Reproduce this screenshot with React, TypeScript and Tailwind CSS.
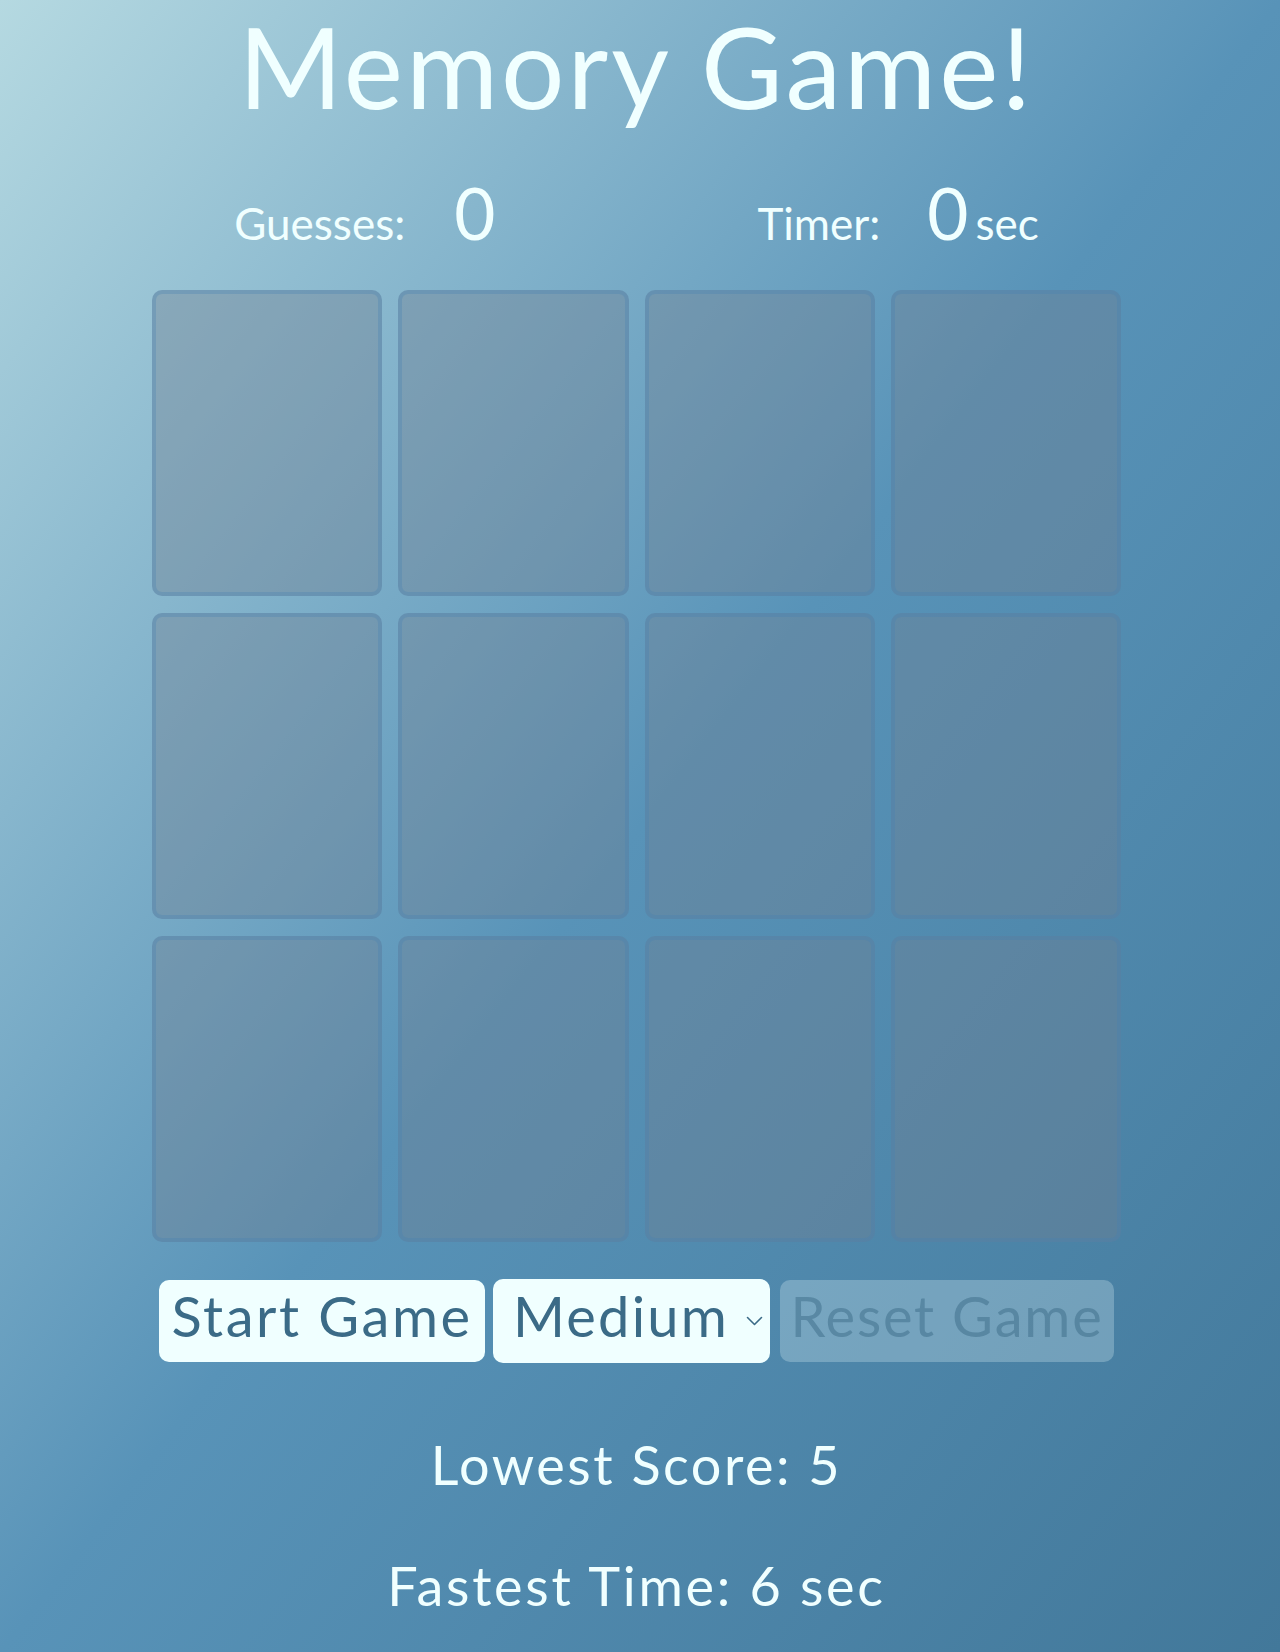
import React from "react";

export default function App() {
  const cards = Array.from({ length: 12 });
  return (
    <div
      className="min-h-[1652px] w-full pr-[7px] flex flex-col items-center bg-gradient-to-br from-[#b5d9e1] via-[#5893b8] to-[#42789a] text-[#f0ffff]"
      style={{ fontFamily: "Lato, 'Open Sans', sans-serif" }}
    >
      <h1 className="mt-[10px] text-[112px] leading-none font-normal tracking-[3px] whitespace-nowrap">
        Memory Game!
      </h1>

      <div className="mt-[55px] flex justify-center items-baseline gap-[262px] leading-none">
        <div className="flex items-baseline gap-[49px]">
          <span className="text-[44px] leading-none">Guesses:</span>
          <span className="text-[71px] leading-none">0</span>
        </div>
        <div className="flex items-baseline">
          <span className="text-[44px] leading-none">Timer:</span>
          <span className="ml-[47px] text-[71px] leading-none">0</span>
          <span className="ml-[7px] text-[44px] leading-none">sec</span>
        </div>
      </div>

      <div className="mt-[42px] w-[969px] grid grid-cols-4 grid-rows-[repeat(3,306px)] gap-x-[16px] gap-y-[17px]">
        {cards.map((_, i) => (
          <div
            key={i}
            className="rounded-[10px] border-4 border-[rgba(70,130,180,0.3)] bg-[rgba(112,128,144,0.4)]"
          />
        ))}
      </div>

      <div className="mt-[37px] h-[84px] flex items-center">
        <button className="h-[82px] w-[326px] rounded-[10px] bg-[#f0ffff] text-[#3b6b87] text-[56px] leading-none tracking-[2.5px] pb-[10px] whitespace-nowrap">
          Start Game
        </button>
        <div className="relative ml-[8px] h-[84px] w-[277px]">
          <select
            defaultValue="Medium"
            className="appearance-none h-full w-full rounded-[10px] bg-[#f0ffff] text-[#3b6b87] text-[56px] leading-none tracking-[2.2px] pl-[20px] pb-[10px] outline-none"
            style={{ fontFamily: "Lato, 'Open Sans', sans-serif" }}
          >
            <option>Easy</option>
            <option>Medium</option>
            <option>Hard</option>
          </select>
          <svg
            className="absolute right-[7px] top-[37px] pointer-events-none"
            width="17"
            height="10"
            viewBox="0 0 17 10"
            fill="none"
          >
            <path d="M1.5 1.5 L8.5 8.5 L15.5 1.5" stroke="#3b6b87" strokeWidth="1.6" strokeLinecap="round" strokeLinejoin="round" />
          </svg>
        </div>
        <button className="ml-[10px] h-[82px] w-[334px] rounded-[10px] bg-[rgba(240,255,255,0.25)] text-[rgba(59,107,135,0.5)] text-[56px] leading-none tracking-[1.8px] pb-[10px] whitespace-nowrap">
          Reset Game
        </button>
      </div>

      <p className="mt-[75px] text-[54px] leading-none tracking-[2.5px] whitespace-nowrap">Lowest Score: 5</p>
      <p className="mt-[67px] text-[54px] leading-none tracking-[2.7px] whitespace-nowrap">Fastest Time: 6 sec</p>
    </div>
  );
}
